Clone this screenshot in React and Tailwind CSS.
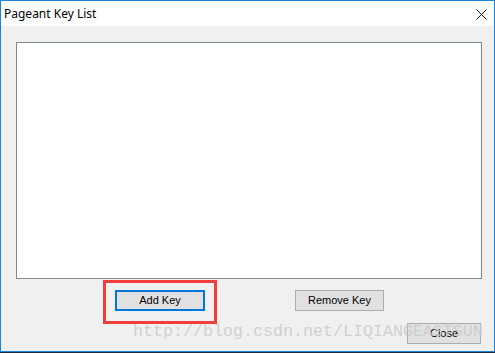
import React from 'react'

function WinButton({children, focused, className = ''}){
  return (
    <div className={`flex items-center justify-center bg-[#e1e1e1] text-[11px] text-black font-['Liberation_Sans',Arial,sans-serif] ${focused ? 'border-2 border-[#0078d7]' : 'border border-[#adadad]'} ${className}`}>
      {children}
    </div>
  )
}

export default function App(){
  return (
    <div className="relative w-[495px] h-[353px] bg-[#1b2940] overflow-hidden">
      <div className="flex flex-col w-[495px] h-[352px] border border-[#1883d7] bg-[#f0f0f0]">
        {/* title bar */}
        <div className="flex h-[25px] items-center justify-between bg-white pl-[3px] pr-[7px]">
          <span className="text-[12px] text-black font-['Noto_Sans',sans-serif] leading-none mt-[1px]">Pageant Key List</span>
          <svg width="11" height="11" viewBox="0 0 11 11" className="mr-[0px] mt-[2px]">
            <path d="M0.5 0.5 L10.5 10.5 M10.5 0.5 L0.5 10.5" stroke="#111" strokeWidth="1" fill="none" />
          </svg>
        </div>

        <div className="flex flex-col pl-[15px] pt-[16px]">
          <div className="w-[466px] h-[237px] border border-[#828790] bg-white" />

          <div className="flex mt-[11px]">
            <WinButton focused className="ml-[99px] w-[90px] h-[21px]">Add Key</WinButton>
            <WinButton className="ml-[90px] w-[89px] h-[21px]">Remove Key</WinButton>
          </div>

          <div className="flex mt-[12px]">
            <WinButton className="ml-[391px] w-[74px] h-[21px]">Close</WinButton>
          </div>
        </div>
      </div>

      {/* annotation + watermark overlays */}
      <div className="absolute left-[103px] top-[280px] w-[114px] h-[44px] border-[3px] border-[#f23d3d] pointer-events-none" />
      <div className="absolute left-[133px] top-[322px] text-[16.67px] leading-[20px] text-[#c8c8c8]/80 font-['Liberation_Mono',monospace] pointer-events-none whitespace-nowrap">
        http://blog.csdn.net/LIQIANGEASTSUN
      </div>
    </div>
  )
}
